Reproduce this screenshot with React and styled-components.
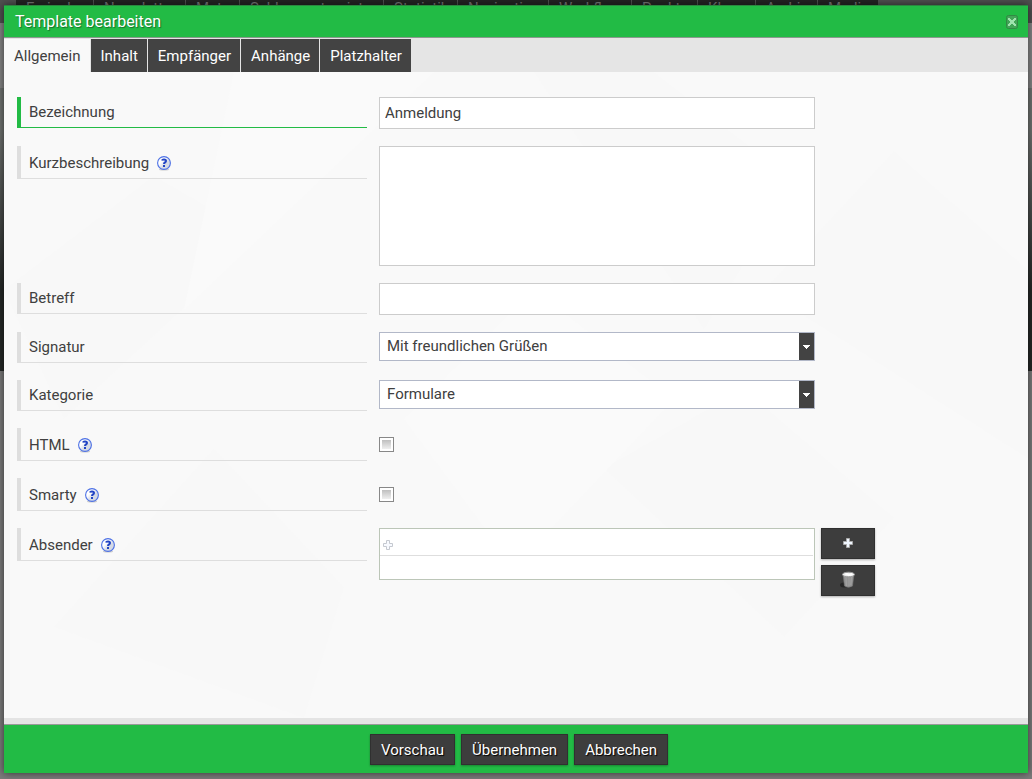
import React from 'react';
import styled, { createGlobalStyle } from 'styled-components';

const GlobalStyle = createGlobalStyle`
	* {
		box-sizing: border-box;
	}
	html,
	body,
	#root {
		height: 100%;
	}
	body {
		margin: 0;
		overflow: hidden;
		color: #404040;
		background: #7b7b7b;
		font-family: Roboto, 'Liberation Sans', sans-serif;
		font-size: 15px;
		line-height: 18px;
	}
	button,
	input,
	select,
	textarea {
		font: inherit;
		color: inherit;
		margin: 0;
	}
`;

const Page = styled.div`
	position: relative;
	height: 100%;
	overflow: hidden;
	background: linear-gradient(
		#505050 23px,
		#858585 23px,
		#858585 88px,
		#6f7270 88px,
		#6f7270 130px,
		#252827 290px,
		#252827 371px,
		#7b7b7b 371px
	);
`;

const PageNav = styled.nav`
	display: flex;
	height: 23px;
	padding-left: 16px;
`;

const NavLink = styled.a`
	flex: none;
	width: ${(props) => props.$width}px;
	padding-left: 10px;
	border-right: 1px solid #505050;
	color: #777;
	background: #242424;
	text-decoration: none;
	line-height: 16px;
`;

const Dialog = styled.form`
	position: absolute;
	top: 5px;
	left: 4px;
	right: 4px;
	bottom: 6px;
	display: flex;
	flex-direction: column;
	background: #f9f9f9;
	box-shadow: 0 0 8px rgba(0, 0, 0, 0.6);
`;

const Header = styled.header`
	display: flex;
	flex: none;
	align-items: center;
	justify-content: space-between;
	height: 33px;
	padding: 0 9px 0 11px;
	color: #fff;
	background: #22bb45;
	border-top: 1px solid #2b8740;
	border-bottom: 1px solid #8d998f;
	&& > h1 {
		margin: 0;
		font-size: 16px;
		font-weight: normal;
		text-shadow: 1px 1px 1px rgba(0, 0, 0, 0.4);
	}
`;

const CloseButton = styled.button`
	display: flex;
	width: 14px;
	height: 14px;
	padding: 0;
	border: 0;
	background: none;
`;

const TabBar = styled.div`
	display: flex;
	flex: none;
	gap: 1px;
	height: 34px;
	padding-top: 1px;
	background: #e5e5e5;
`;

const Tab = styled.button`
	padding: 0 9px 0 10px;
	border: 0;
	color: ${(props) => (props.$active ? '#404040' : '#fff')};
	background: ${(props) => (props.$active ? '#f9f9f9' : '#434343')};
`;

const Content = styled.main`
	position: relative;
	display: flex;
	flex: 1;
	flex-direction: column;
	gap: 17px;
	min-height: 0;
	padding: 25px 13px 0;
	border-bottom: 6px solid #e4e4e4;
`;

const Pattern = styled.svg`
	position: absolute;
	inset: 0;
	width: 100%;
	height: 100%;
	pointer-events: none;
`;

const Row = styled.div`
	position: relative;
	display: grid;
	grid-template-columns: 350px 436px 54px;
	column-gap: 12px;
	align-items: start;
`;

const LabelCell = styled.div`
	display: flex;
	align-items: center;
	gap: 8px;
	height: ${(props) => (props.$help ? 33 : 31)}px;
	padding: ${(props) => (props.$help ? '2px 0 0 8px' : '0 0 0 8px')};
	border-left: 4px solid ${(props) => (props.$active ? '#22bb45' : '#dedede')};
	border-bottom: 1px solid ${(props) => (props.$active ? '#22bb45' : '#dedede')};
`;

const HelpButton = styled.button`
	display: flex;
	padding: 0;
	border: 0;
	background: none;
`;

const TextInput = styled.input`
	width: 100%;
	height: 32px;
	padding: 0 5px;
	border: 1px solid #ccc;
	background: #fff;
	outline: 0;
`;

const TextArea = styled.textarea`
	display: block;
	width: 100%;
	height: 120px;
	padding: 5px;
	border: 1px solid #ccc;
	background: #fff;
	resize: none;
`;

const SelectBox = styled.div`
	position: relative;
	height: 31px;
	&& > select {
		width: 100%;
		height: 29px;
		padding: 0 20px 2px 7px;
		appearance: none;
		border: 1px solid #b2b8c8;
		border-radius: 0;
		background: #fff;
	}
	&& > svg {
		position: absolute;
		top: 1px;
		right: 1px;
		pointer-events: none;
	}
`;

const Checkbox = styled.input`
	appearance: none;
	width: 15px;
	height: 15px;
	margin-top: 9px;
	border: 1px solid #888;
	background: linear-gradient(#b4b4b4, #fafafa);
	box-shadow: inset 0 0 0 2px #fff;
`;

const SenderList = styled.div`
	height: 52px;
	border: 1px solid #bcc6b8;
	background: #fff;
	&& > div {
		display: flex;
		align-items: center;
		height: 27px;
		margin-right: 1px;
		padding: 6px 3px 0;
		border-bottom: 1px solid #dedede;
	}
`;

const SideButtons = styled.div`
	display: grid;
	gap: 6px;
	margin-left: -6px;
`;

const DarkButton = styled.button`
	display: flex;
	align-items: center;
	justify-content: center;
	width: ${(props) => (props.$icon ? '54px' : 'auto')};
	height: 31px;
	padding: ${(props) => (props.$icon ? '0 10px 2px' : '0 10px')};
	border: 1px solid #303030;
	color: #fff;
	background: #3d3d3d;
	box-shadow: 0 1px 2px rgba(0, 0, 0, 0.3);
	text-shadow: 1px 1px 1px #000;
`;

const Footer = styled.footer`
	display: flex;
	flex: none;
	justify-content: center;
	gap: 6px;
	height: 49px;
	padding: 9px 0 0 6px;
	background: #22bb45;
	border-top: 1px solid #999;
`;

const pageLinks = [
	['Freigabe', 78],
	['Newsletter', 92],
	['Meta', 54],
	['Schlagwortregister', 144],
	['Statistik', 74],
	['Navigation', 91],
	['Workflow', 83],
	['Punkte', 66],
	['Klone', 58],
	['Archiv', 62],
	['Media', 61],
];

const tabs = ['Allgemein', 'Inhalt', 'Empfänger', 'Anhänge', 'Platzhalter'];

function CloseIcon() {
	return (
		<svg width="14" height="14" viewBox="0 0 14 14">
			<rect x="1.5" y=".5" width="11" height="13" rx="2" fill="#42a557" stroke="#318944" />
			<path d="M3 3h2v1h1v1h2V4h1V3h2v2h-1v1H9v2h1v1h1v2H9v-1H8V9H6v1H5v1H3V9h1V8h1V6H4V5H3z" fill="#9ee3ad" />
		</svg>
	);
}

function HelpIcon() {
	return (
		<svg width="14" height="15" viewBox="0 0 14 15">
			<defs>
				<linearGradient id="help" x1="0" y1="0" x2="1" y2="1">
					<stop offset="0.35" stopColor="#fff" />
					<stop offset="0.6" stopColor="#d5dae5" />
				</linearGradient>
			</defs>
			<ellipse cx="7" cy="13.5" rx="5" ry="1" fill="#ccc" />
			<circle cx="7" cy="7" r="6.4" fill="url(#help)" stroke="#4c70e5" strokeWidth="1.1" />
			<path d="M5 4.6C5.4 3.2 9 3.2 9 5.1C9 6.5 7 6.3 7 8M7 9v2" fill="none" stroke="#2345c4" strokeWidth="2" />
		</svg>
	);
}

function PlusIcon({ faded }) {
	return (
		<svg width="10" height="10" viewBox="0 0 10 10">
			<path
				d="M3.5 .5h3v3h3v3h-3v3h-3v-3h-3v-3h3z"
				fill={faded ? '#f8faff' : '#f0f6ff'}
				stroke={faded ? '#c5c9d0' : '#aaa'}
			/>
		</svg>
	);
}

function TrashIcon() {
	return (
		<svg width="16" height="18" viewBox="0 0 16 18">
			<ellipse cx="4" cy="14" rx="4" ry="2.5" fill="#262626" />
			<path d="M3 3l1.5 12q4 2.5 8 0L14 3z" fill="#949494" stroke="#777" strokeWidth=".6" />
			<path d="M6 6l.5 9M9 6v9M11.5 6l-.7 8" stroke="#a8a8a8" strokeWidth=".7" />
			<ellipse cx="8.5" cy="3.5" rx="6" ry="2.3" fill="#eee" stroke="#999" />
			<path d="M4 3l3-1 2 1 3-1 1 2-4 1z" fill="#fff" />
		</svg>
	);
}

function Field({ id, label, help, active, action, children }) {
	return (
		<Row>
			<LabelCell $help={help} $active={active}>
				<label htmlFor={id}>{label}</label>
				{help && (
					<HelpButton type="button" aria-label={`Hilfe: ${label}`}>
						<HelpIcon />
					</HelpButton>
				)}
			</LabelCell>
			{children}
			{action}
		</Row>
	);
}

function Select({ id, option }) {
	return (
		<SelectBox>
			<select id={id}>
				<option>{option}</option>
			</select>
			<svg width="15" height="27" viewBox="0 0 15 27">
				<path d="M0 0h15v27H0z" fill="#434343" />
				<path d="M4 12h7v1h-1v1H9v1H8v1H7v-1H6v-1H5v-1H4z" fill="#fff" />
			</svg>
		</SelectBox>
	);
}

export default function App() {
	return (
		<>
			<GlobalStyle />
			<Page>
				<PageNav>
					{pageLinks.map(([name, width]) => (
						<NavLink key={name} href="#" $width={width}>
							{name}
						</NavLink>
					))}
				</PageNav>
				<Dialog onSubmit={(e) => e.preventDefault()}>
					<Header>
						<h1>Template bearbeiten</h1>
						<CloseButton type="button" aria-label="Schließen">
							<CloseIcon />
						</CloseButton>
					</Header>
					<TabBar role="tablist">
						{tabs.map((tab, index) => (
							<Tab key={tab} type="button" role="tab" aria-selected={index === 0} $active={index === 0}>
								{tab}
							</Tab>
						))}
					</TabBar>
					<Content>
						<Pattern viewBox="0 0 1024 652" preserveAspectRatio="none" aria-hidden="true">
							<path
								d="M0 220L150 105L210 140V210L60 350zM530 0H650L790 110L700 260zM760 220L890 80L1024 200V390zM600 400L740 320L890 450L780 570zM50 560L210 380L340 520L300 652z"
								fill="#f8f8f8"
							/>
							<path d="M230 0H430L180 240zM400 350L530 220L670 330L510 500z" fill="#fafafa" />
						</Pattern>
						<Field id="name" label="Bezeichnung" active>
							<TextInput id="name" defaultValue="Anmeldung" />
						</Field>
						<Field id="description" label="Kurzbeschreibung" help>
							<TextArea id="description" />
						</Field>
						<Field id="subject" label="Betreff">
							<TextInput id="subject" />
						</Field>
						<Field id="signature" label="Signatur">
							<Select id="signature" option="Mit freundlichen Grüßen" />
						</Field>
						<Field id="category" label="Kategorie">
							<Select id="category" option="Formulare" />
						</Field>
						<Field id="html" label="HTML" help>
							<Checkbox id="html" type="checkbox" />
						</Field>
						<Field id="smarty" label="Smarty" help>
							<Checkbox id="smarty" type="checkbox" />
						</Field>
						<Field
							id="sender"
							label="Absender"
							help
							action={
								<SideButtons>
									<DarkButton type="button" aria-label="Hinzufügen" $icon>
										<PlusIcon />
									</DarkButton>
									<DarkButton type="button" aria-label="Löschen" $icon>
										<TrashIcon />
									</DarkButton>
								</SideButtons>
							}
						>
							<SenderList id="sender">
								<div>
									<PlusIcon faded />
								</div>
							</SenderList>
						</Field>
					</Content>
					<Footer>
						<DarkButton type="button">Vorschau</DarkButton>
						<DarkButton type="submit">Übernehmen</DarkButton>
						<DarkButton type="button">Abbrechen</DarkButton>
					</Footer>
				</Dialog>
			</Page>
		</>
	);
}
